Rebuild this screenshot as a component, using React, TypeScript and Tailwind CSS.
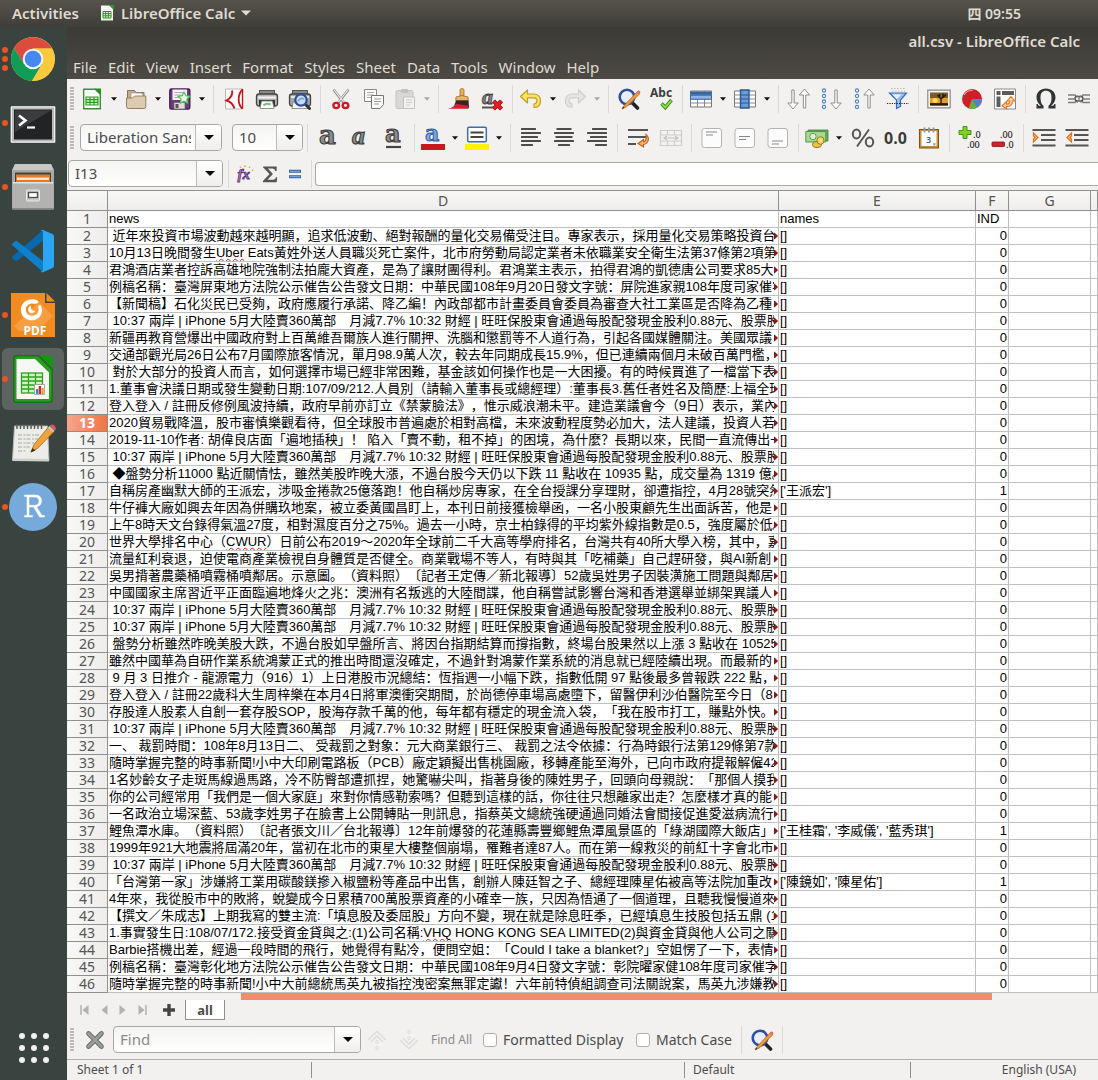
import React from "react";

type Row = { text: string; flag?: string; names?: string; ind?: number };

const repeated =
  " 10:37 兩岸 | iPhone 5月大陸賣360萬部　月減7.7% 10:32 財經 | 旺旺保股東會通過每股配發現金股利0.88元、股票股";

const rows: Row[] = [
  { text: " 近年來投資市場波動越來越明顯，追求低波動、絕對報酬的量化交易備受注目。專家表示，採用量化交易策略投資台" },
  { text: "10月13日晚間發生Uber Eats黃姓外送人員職災死亡案件，北市府勞動局認定業者未依職業安全衛生法第37條第2項第", flag: "Uber" },
  { text: "君鴻酒店業者控訴高雄地院強制法拍龐大資產，是為了讓財團得利。君鴻業主表示，拍得君鴻的凱德唐公司要求85大" },
  { text: "例稿名稱：臺灣屏東地方法院公示催告公告發文日期：中華民國108年9月20日發文字號：屏院進家親108年度司家催字" },
  { text: "【新聞稿】石化災民已受夠，政府應履行承諾、降乙編！內政部都市計畫委員會委員為審查大社工業區是否降為乙種" },
  { text: repeated },
  { text: "新疆再教育營爆出中國政府對上百萬維吾爾族人進行關押、洗腦和懲罰等不人道行為，引起各國媒體關注。美國眾議" },
  { text: "交通部觀光局26日公布7月國際旅客情況，單月98.9萬人次，較去年同期成長15.9%，但已連續兩個月未破百萬門檻，" },
  { text: " 對於大部分的投資人而言，如何選擇市場已經非常困難，基金該如何操作也是一大困擾。有的時候買進了一檔當下表" },
  { text: "1.董事會決議日期或發生變動日期:107/09/212.人員別（請輸入董事長或總經理）:董事長3.舊任者姓名及簡歷:上福全球" },
  { text: "登入登入 / 註冊反修例風波持續，政府早前亦訂立《禁蒙臉法》，惟示威浪潮未平。建造業議會今（9日）表示，業內" },
  { text: "2020貿易戰降溫，股市審慎樂觀看待，但全球股市普遍處於相對高檔，未來波動程度勢必加大，法人建議，投資人若" },
  { text: "2019-11-10作者: 胡偉良店面「遍地插秧」！ 陷入「賣不動，租不掉」的困境，為什麼？長期以來，民間一直流傳出一" },
  { text: repeated },
  { text: " ◆盤勢分析11000 點近關情怯，雖然美股昨晚大漲，不過台股今天仍以下跌 11 點收在 10935 點，成交量為 1319 億。" },
  { text: "自稱房產幽默大師的王派宏，涉吸金捲款25億落跑！他自稱炒房專家，在全台授課分享理財，卻遭指控，4月28號突然", names: "['王派宏']", ind: 1 },
  { text: "牛仔褲大廠如興去年因為併購玖地案，被立委黃國昌盯上，本刊日前接獲檢舉函，一名小股東顧先生出面訴苦，他是" },
  { text: "上午8時天文台錄得氣溫27度，相對濕度百分之75%。過去一小時，京士柏錄得的平均紫外線指數是0.5，強度屬於低。" },
  { text: "世界大學排名中心（CWUR）日前公布2019～2020年全球前二千大高等學府排名，台灣共有40所大學入榜，其中，嘉", flag: "CWUR" },
  { text: "流量紅利衰退，迫使電商產業檢視自身體質是否健全。商業戰場不等人，有時與其「吃補藥」自己趕研發，與AI新創" },
  { text: "吳男揹著農藥桶噴霧桶噴鄰居。示意圖。（資料照）〔記者王定傳／新北報導〕52歲吳姓男子因裝潢施工問題與鄰居" },
  { text: "中國國家主席習近平正面臨遍地烽火之兆：澳洲有名叛逃的大陸間諜，他自稱嘗試影響台灣和香港選舉並綁架異議人" },
  { text: repeated },
  { text: repeated },
  { text: " 盤勢分析雖然昨晚美股大跌，不過台股如早盤所言、將因台指期結算而撐指數，終場台股果然以上漲 3 點收在 10525" },
  { text: "雖然中國華為自研作業系統鴻蒙正式的推出時間還沒確定，不過針對鴻蒙作業系統的消息就已經陸續出現。而最新的" },
  { text: " 9 月 3 日推介 - 龍源電力（916）1）上日港股市況總結：恆指週一小幅下跌，指數低開 97 點後最多曾報跌 222 點，" },
  { text: "登入登入 / 註冊22歲科大生周梓樂在本月4日將軍澳衝突期間，於尚德停車場高處墮下，留醫伊利沙伯醫院至今日（8" },
  { text: "存股達人股素人自創一套存股SOP，股海存款千萬的他，每年都有穩定的現金流入袋，「我在股市打工，賺點外快。" },
  { text: repeated },
  { text: "一、 裁罰時間：108年8月13日二、 受裁罰之對象：元大商業銀行三、 裁罰之法令依據：行為時銀行法第129條第7款" },
  { text: "隨時掌握完整的時事新聞!小中大印刷電路板（PCB）廠定穎擬出售桃園廠，移轉產能至海外，已向市政府提報解僱42" },
  { text: "1名妙齡女子走斑馬線過馬路，冷不防臀部遭抓捏，她驚嚇尖叫，指著身後的陳姓男子，回頭向母親說：「那個人摸我" },
  { text: "你的公司經常用「我們是一個大家庭」來對你情感勒索嗎？但聽到這樣的話，你往往只想離家出走？怎麼樣才真的能" },
  { text: "一名政治立場深藍、53歲李姓男子在臉書上公開轉貼一則訊息，指蔡英文總統強硬通過同婚法會間接促進愛滋病流行" },
  { text: "鯉魚潭水庫。（資料照）〔記者張文川／台北報導〕12年前爆發的花蓮縣壽豐鄉鯉魚潭風景區的「綠湖國際大飯店」", names: "['王桂霜', '李威儀', '藍秀琪']", ind: 1 },
  { text: "1999年921大地震將屆滿20年，當初在北市的東星大樓整個崩塌，罹難者達87人。而在第一線救災的前紅十字會北市" },
  { text: repeated },
  { text: "「台灣第一家」涉嫌將工業用碳酸鎂摻入椒鹽粉等產品中出售，創辦人陳廷智之子、總經理陳星佑被高等法院加重改", names: "['陳鏡如', '陳星佑']", ind: 1 },
  { text: "4年來，我從股市中的敗將，蛻變成今日累積700萬股票資產的小確幸一族，只因為悟通了一個道理，且聽我慢慢道來" },
  { text: "【撰文／朱成志】上期我寫的雙主流:「填息股及委屈股」方向不變，現在就是除息旺季，已經填息生技股包括五鼎 (1" },
  { text: "1.事實發生日:108/07/172.接受資金貸與之:(1)公司名稱:VHQ HONG KONG SEA LIMITED(2)與資金貸與他人公司之關", flag: "VHQ" },
  { text: "Barbie搭機出差，經過一段時間的飛行，她覺得有點冷，便問空姐：「Could I take a blanket?」空姐愣了一下，表情" },
  { text: "例稿名稱：臺灣彰化地方法院公示催告公告發文日期：中華民國108年9月4日發文字號：彰院曜家健108年度司家催字" },
  { text: "隨時掌握完整的時事新聞!小中大前總統馬英九被指控洩密案無罪定讞！六年前特偵組調查司法關說案，馬英九涉嫌教" },
];

const Svg = ({ children, size = 24 }: { children: React.ReactNode; size?: number }) => (
  <svg viewBox="0 0 24 24" width={size} height={size} fill="none" aria-hidden="true" className="shrink-0 overflow-visible">
    {children}
  </svg>
);

/* ---------- toolbar icons ---------- */
const NewDoc = () => (
  <Svg>
    <path d="M3.700 2.200h11.500l5.100 5.100v14.500H3.700z" fill="#fff" stroke="#3b8f33" strokeWidth="1.400" />
    <path d="M14.500 1.500h6.500v6.500z" fill="#2f8a25" />
    <path d="M6 10h12v8H6z" fill="#d8f5d0" stroke="#2e9a22" strokeWidth="1.200" />
    <path d="M6 12.700h12M6 15.300h12M10 10v8M14 10v8" stroke="#2e9a22" strokeWidth="1.200" />
  </Svg>
);
const Folder = () => (
  <Svg>
    <path d="M3.500 20V3.500h7l1.500 2h8V20z" fill="#c2ad90" stroke="#8b7355" />
    <path d="M7 6h10l2 2v6H7z" fill="#fff" stroke="#999" strokeWidth=".8" />
    <path d="M2.500 11h6l2-2h11.300v10.500q0 2-2 2H4.500q-2 0-2-2z" fill="#dccbb0" stroke="#95805f" />
  </Svg>
);
const Save = () => (
  <Svg>
    <rect x="1.800" y="2" width="20" height="20" rx="1.500" fill="#6d3a7b" stroke="#472050" strokeWidth="1.400" />
    <rect x="4.500" y="2.500" width="14.500" height="10.500" fill="#f6f2f7" />
    <path d="M6.500 5.500h9M6.500 8h7M6.500 10.500h6" stroke="#aaa" />
    <rect x="6" y="15.500" width="11" height="6.500" fill="#ddd" stroke="#666" strokeWidth=".7" />
    <rect x="7.500" y="17" width="3" height="4" fill="#555" />
    <path d="M16 5l1.800 3.700 4 .6-2.900 2.800.7 4-3.600-1.900-3.600 1.900.7-4-2.900-2.800 4-.6z" fill="#e9ffe8" stroke="#50c35b" strokeWidth="1.200" />
  </Svg>
);
const Pdf = () => (
  <Svg>
    <path d="M3.500 2h17v20h-17z" fill="#fdfdfd" stroke="#b9b9b9" />
    <path d="M10 3.500C11 7 9.500 10.500 4.500 13.500c4 1 6.500 3.500 8 8" stroke="#c8161d" strokeWidth="1.900" />
    <path d="M20.500 2.500c-5 5-5 14-.5 19" stroke="#c8161d" strokeWidth="1.800" />
    <path d="M20.500 2v20" stroke="#c8161d" strokeWidth="1.400" />
  </Svg>
);
const Printer = () => (
  <Svg>
    <rect x="4.500" y="3.500" width="15" height="6" fill="#888" stroke="#555" />
    <rect x="1.500" y="7" width="21" height="12" rx="2.500" fill="#b6b6b4" stroke="#444" strokeWidth="1.300" />
    <path d="M3 10.500h18" stroke="#f4f4f4" strokeWidth="2" />
    <path d="M4 13h16v6H4z" fill="#333" />
    <path d="M6.500 14h11l1.500 7.500H5z" fill="#fcfcfc" stroke="#777" strokeWidth=".8" />
    <path d="M8.500 18.500q3-3 7-1" stroke="#6fc36f" strokeWidth="2" />
  </Svg>
);
const Preview = () => (
  <Svg>
    <rect x="4.500" y="3.500" width="15" height="6" fill="#888" stroke="#555" />
    <rect x="1.500" y="7" width="21" height="12" rx="2.500" fill="#a7a7a5" stroke="#444" strokeWidth="1.300" />
    <path d="M3 10h18" stroke="#eee" strokeWidth="1.800" />
    <path d="M5 15h14l1 6.500H4z" fill="#f2f2f2" stroke="#777" strokeWidth=".8" />
    <path d="M17.500 17.500l4 4" stroke="#333" strokeWidth="3" strokeLinecap="round" />
    <circle cx="13" cy="13" r="5.700" fill="#c8d8ef" stroke="#2c4f9c" strokeWidth="2.200" />
    <path d="M10 14q3-4 6-2" stroke="#71a7c8" strokeWidth="1.600" />
  </Svg>
);
const Cut = () => (
  <Svg>
    <path d="M4.500 2.500L15 16M19.500 2.500L9 16" stroke="#888" strokeWidth="2.600" />
    <path d="M4.700 2.500L15 15.500M19.300 2.500L9 15.500" stroke="#eee" strokeWidth="1.200" />
    <ellipse cx="7.200" cy="18.500" rx="2.800" ry="2.600" stroke="#cf1820" strokeWidth="2.400" />
    <ellipse cx="16.500" cy="18.500" rx="2.800" ry="2.600" stroke="#cf1820" strokeWidth="2.400" />
  </Svg>
);
const Copy = () => (
  <Svg>
    <path d="M2.500 2.500h12v12h-12z" fill="#fdfdfd" stroke="#888" />
    <path d="M5 5.500h7M5 8h7M5 10.500h5" stroke="#aaa" />
    <path d="M9.500 8.500h12v9l-3.500 4h-8.500z" fill="#fdfdfd" stroke="#777" />
    <path d="M12 12h7M12 14.500h7M12 17h5" stroke="#999" />
  </Svg>
);
const Paste = () => (
  <Svg>
    <rect x="3" y="3.500" width="17" height="18" rx="1.500" fill="#d9d8d6" stroke="#c4c3c1" />
    <rect x="7.500" y="2" width="8" height="4" rx="1.500" fill="#c2c1bf" />
    <path d="M10.500 10h11v11.500h-11z" fill="#f3f2f1" stroke="#c2c1bf" />
    <path d="M13 13h6M13 15.500h6M13 18h4" stroke="#cccbc9" />
  </Svg>
);
const Brush = () => (
  <Svg>
    <rect x="13" y="1.500" width="4" height="9" rx="1.800" fill="#e9ad55" stroke="#a86a1e" strokeWidth=".8" />
    <path d="M9 10q6-3 12 0l.3 3.500H8.700z" fill="#e6b566" stroke="#9a6a2b" strokeWidth=".8" />
    <path d="M9 13.500h12.500l.5 7.500H6.500z" fill="#3a2328" />
    <path d="M1 21.800q6-1.500 8-5l12 2 .5 3z" fill="#cf2331" />
  </Svg>
);
const ClearFormat = () => (
  <Svg>
    <text x="2" y="16.500" fontSize="22" fontStyle="italic" fontWeight="700" fontFamily="Liberation Serif, serif" fill="#888" stroke="#3d3d3d" strokeWidth=".9">a</text>
    <path d="M2 20.500h11" stroke="#555" strokeWidth="2" />
    <path d="M13.500 14l8 8M21.500 14l-8 8" stroke="#8f0b10" strokeWidth="4.200" />
    <path d="M13.500 14l8 8M21.500 14l-8 8" stroke="#ee1c22" strokeWidth="2.600" />
  </Svg>
);
const Undo = () => (
  <Svg>
    <path d="M1.500 9.500L8.500 3v4h6.500q6.500.5 6.500 7t-6.500 6.500v-3.500q3-.5 3-3.200t-3-3H8.500V16z" fill="#f6e26b" stroke="#c3a01b" strokeWidth="1.200" strokeLinejoin="round" />
  </Svg>
);
const Redo = () => (
  <Svg>
    <path d="M22.500 9.500L15.500 3v4H9q-6.500.5-6.500 7T9 20v-3q-3-1-3-3.500t3-2.700h6.500V16z" fill="#e6e5e3" stroke="#cfcecc" strokeWidth="1.200" strokeLinejoin="round" />
  </Svg>
);
const FindReplace = () => (
  <Svg>
    <path d="M14.500 15l6 6" stroke="#222" strokeWidth="3.600" strokeLinecap="round" />
    <circle cx="10" cy="10" r="7.300" fill="#e9eef6" stroke="#2e4f9f" strokeWidth="2.600" />
    <path d="M20.500 4.500L8 17.500l-3 4.500 5-2.500L22.500 7z" fill="#f09a3e" stroke="#a85e17" strokeWidth=".7" />
    <path d="M20 5l1-1.500q2-.5 2.500 2l-1.500 1.700z" fill="#e46a6a" />
    <path d="M6 19.500l-1 2.500 2.500-1.200z" fill="#333" />
  </Svg>
);
const Spell = () => (
  <Svg>
    <text x="0" y="10" fontSize="12" fontWeight="700" fontFamily="Noto Sans, sans-serif" fill="#3d3d3d">Abc</text>
    <path d="M11.500 16.500l3.800 4L21.500 13" stroke="#3d8d19" strokeWidth="3.600" />
    <path d="M11.800 16.800l3.500 3.500L21.200 13.300" stroke="#8ed94f" strokeWidth="1.800" />
  </Svg>
);
const RowsIcon = () => (
  <Svg>
    <path d="M1.500 4h21v16h-21z" fill="#fff" stroke="#777" />
    <path d="M1.500 8h21M1.500 12h21M1.500 16h21M8.500 4v16M15.500 4v16" stroke="#888" />
    <path d="M1.500 4.500h21v3.300h-21z" fill="#3465a4" />
    <path d="M1.500 8.200h21v4h-21z" fill="#8db4e3" stroke="#3465a4" />
  </Svg>
);
const ColsIcon = () => (
  <Svg>
    <path d="M1.500 4h21v16h-21z" fill="#fff" stroke="#777" />
    <path d="M1.500 8h21M1.500 12h21M1.500 16h21M8.500 4v16M15.500 4v16" stroke="#888" />
    <path d="M7.500 3h8.500v18H7.500z" fill="#6a9bd8" stroke="#2c5490" strokeWidth="1.400" />
    <path d="M8 8h7.500M8 12h7.500M8 16h7.500" stroke="#2c5490" />
  </Svg>
);
const ArrowDownShape = ({ x }: { x: number }) => (
  <path d={`M${x - 1.2} 3v13h-4l5.200 6 5.200-6h-4V3z`} fill="#fafafa" stroke="#8f8f8f" strokeWidth="1" />
);
const ArrowUpShape = ({ x }: { x: number }) => (
  <path d={`M${x - 1.2} 21V8h-4L${x} 2l5.200 6h-4v13z`} fill="#fafafa" stroke="#8f8f8f" strokeWidth="1" />
);
const SortBoth = () => (
  <Svg>
    <ArrowDownShape x={6} />
    <ArrowUpShape x={17.5} />
  </Svg>
);
const Dots = () => (
  <>
    {[3.5, 9, 14.5, 20].map((y) => (
      <circle key={y} cx="4" cy={y} r="1.600" fill="#fff" stroke="#4a7fc1" strokeWidth="1.100" />
    ))}
  </>
);
const SortAsc = () => (
  <Svg>
    <Dots />
    <ArrowDownShape x={16} />
  </Svg>
);
const SortDesc = () => (
  <Svg>
    <Dots />
    <ArrowUpShape x={16} />
  </Svg>
);
const Filter = () => (
  <Svg>
    <path d="M5 1.500h15M6 4h13" stroke="#bbb" strokeDasharray="1.500 1.500" />
    <path d="M3.500 6h17l-6 7v6.500l-4 2v-8.500z" fill="#9cc0ea" stroke="#3a6db0" strokeWidth="1.200" />
    <path d="M6.500 7.300h9l-5 5z" fill="#e3effb" />
    <path d="M1 16.500h22" stroke="#222" strokeWidth="1.200" strokeDasharray="1.200 1.200" />
  </Svg>
);
const Picture = () => (
  <Svg>
    <path d="M.8 3.200h22.400v17.600H.8z" fill="#f5f5f3" stroke="#8a8a87" strokeWidth="1.200" />
    <path d="M3 5.500h18v13H3z" fill="#7a5c2c" />
    <path d="M3 11h18v5H3z" fill="#e79b2a" />
    <circle cx="8" cy="13.500" r="2.500" fill="#ffd96b" />
    <path d="M3 16.200h18v2.300H3z" fill="#2b1d0d" />
    <path d="M14 17v-5l-3.500-4M14 12l5-4.500M16 10V6.500M12 10l1-3" stroke="#1c130a" strokeWidth="1.300" />
  </Svg>
);
const Chart = () => (
  <Svg>
    <circle cx="12" cy="12" r="10" fill="#cf1f26" />
    <path d="M12 12h10a10 10 0 0 1-4.500 8.500z" fill="#4a86c9" />
    <path d="M12 12l5.500 8.500A10 10 0 0 1 8.500 21.400z" fill="#6dab43" />
    <path d="M4 8q3-5 9-4.500" stroke="#f08d8d" strokeWidth="1.200" />
  </Svg>
);
const Pivot = () => (
  <Svg>
    <path d="M1.500 2h21v20h-21z" fill="#fff" stroke="#888" />
    <path d="M3.500 4h4v4h-4zM9 4h12v4H9zM3.500 9.500h4V20h-4z" fill="#5c5c5c" />
    <path d="M18 9.500l-4 4.500h2.700q0 3.300-3.200 3.300v-2.500L9 18.800l4.500 3.200v-2.500q6 0 6-5.500h2.500z" fill="#fbd2a3" stroke="#e2731b" strokeWidth="1.100" />
  </Svg>
);
const Omega = () => (
  <Svg>
    <path d="M2.500 21.500h7v-2.700C7 17 6.500 14 6.500 10.500 6.500 6 8.500 3.800 12 3.800s5.500 2.200 5.500 6.700c0 3.500-.5 6.500-3 8.300v2.700h7V17h-1.200q-.3 1.800-1.500 1.800H17c2.500-2 4.500-4.500 4.500-8.300C21.500 5 17.500 1.500 12 1.500S2.500 5 2.500 10.500c0 3.800 2 6.300 4.500 8.300H5.200Q4 18.800 3.700 17H2.500z" fill="#2f3437" />
  </Svg>
);
const Chain = () => (
  <Svg>
    <path d="M1 8h7l1.500 2M1 15.500h7l1.500-2M23 8h-7l-1.500 2M23 15.500h-7l-1.500-2M1 12h6M17 12h6" stroke="#7d7d7d" strokeWidth="1.500" />
    <rect x="8" y="9.500" width="8" height="4.500" rx="2.200" stroke="#555" strokeWidth="1.500" />
    <path d="M10 8l4 8M14 8l-4 8" stroke="#888" />
  </Svg>
);
const Letter = ({ style, under }: { style?: string; under?: boolean }) => (
  <Svg>
    <text
      x="3"
      y={under ? 16 : 18}
      fontSize={under ? 24 : 26}
      fontStyle={style}
      fontWeight="700"
      fontFamily={style ? "Liberation Serif, serif" : "DejaVu Serif, serif"}
      fill="#8c8c8c"
      stroke="#3d3d3d"
      strokeWidth="1.100"
    >
      a
    </text>
    {under && <path d="M4 21h15" stroke="#444" strokeWidth="2.200" />}
  </Svg>
);
const FontColor = () => (
  <Svg>
    <text x="4" y="15" fontSize="22" fontWeight="700" fontFamily="DejaVu Serif, serif" fill="#7ea9dc" stroke="#2d5c9e" strokeWidth="1">a</text>
    <path d="M0 18h24v6H0z" fill="#c9191f" />
  </Svg>
);
const Highlight = () => (
  <Svg>
    <rect x="2.700" y="1.200" width="18.600" height="14.600" rx="1" fill="#fdfdfd" stroke="#3d6fae" strokeWidth="1.500" />
    <path d="M5.500 6.500h13M5.500 11h13" stroke="#444" strokeWidth="1.800" />
    <path d="M0 18h24v6H0z" fill="#fdf200" />
  </Svg>
);
const Align = ({ kind }: { kind: "l" | "c" | "r" }) => {
  const widths = [15, 20, 17, 20, 12];
  return (
    <Svg>
      {widths.map((w, i) => {
        const x = kind === "l" ? 2 : kind === "c" ? 12 - w / 2 : 22 - w;
        return <rect key={i} x={x} y={2 + i * 4} width={w} height="2" rx=".6" fill="#4c4c4c" />;
      })}
    </Svg>
  );
};
const Wrap = () => (
  <Svg>
    <path d="M2 4h20M2 11h18M2 18h8" stroke="#555" strokeWidth="2.200" />
    <path d="M20 8.500q4 3.500 1.500 7.500-1.500 2.500-4 2.500v2.500L12 17.500l5.500-4v2.200q3.500-.7 2.500-7.200z" fill="#f6b26b" stroke="#c65f11" strokeWidth="1.100" />
  </Svg>
);
const Merge = () => (
  <Svg>
    <path d="M1.500 4.500h21v15h-21zM1.500 9h21M1.500 15h21M8.500 4.500V9M15.500 4.500V9M8.500 15v4.500M15.500 15v4.500" stroke="#cfcecc" strokeWidth="1.200" />
    <path d="M5 12h14M8 10l-3 2 3 2M16 10l3 2-3 2" stroke="#c4c3c1" strokeWidth="1.200" />
  </Svg>
);
const VAlign = ({ y }: { y: number }) => (
  <Svg>
    <rect x="2" y="2.500" width="19.500" height="19" rx="2.500" fill="#fcfcfc" stroke="#b4b3b1" />
    <path d={`M6 ${y}h11M6 ${y + 3}h7`} stroke="#888" strokeWidth="1.100" />
  </Svg>
);
const Money = () => (
  <Svg>
    <path d="M3 4h20v11H3z" fill="#6fb05a" stroke="#3f7f2f" strokeWidth=".8" />
    <path d="M.8 5.500h20V16H.8z" fill="#a9d896" stroke="#4e8f3c" strokeWidth=".9" />
    <circle cx="8" cy="10.500" r="3.200" fill="#dff2d6" stroke="#5e9e4c" />
    <ellipse cx="12" cy="18.500" rx="4.500" ry="3" fill="#e8c34b" stroke="#9a7711" />
    <ellipse cx="15.500" cy="14.500" rx="3.500" ry="3.800" fill="#f3d871" stroke="#9a7711" />
  </Svg>
);
const Percent = () => (
  <Svg>
    <ellipse cx="5.500" cy="8" rx="3.700" ry="4.500" stroke="#555" strokeWidth="2" />
    <ellipse cx="18.500" cy="16" rx="3.700" ry="4.500" stroke="#555" strokeWidth="2" />
    <path d="M18 3.500L6 20.500" stroke="#555" strokeWidth="1.900" />
  </Svg>
);
const Calendar = () => (
  <Svg>
    <rect x="2.500" y="3.500" width="19" height="18.500" fill="#c98f3d" stroke="#7d5116" />
    <path d="M4.500 5h15v15h-15z" fill="#fff" />
    <path d="M7.500 1.500v5M12 1.500v5M16.500 1.500v5" stroke="#999" strokeWidth="2" />
    <text x="9" y="16.500" fontSize="9" fontWeight="600" fontFamily="Noto Sans, sans-serif" fill="#3b5f8c">3</text>
    <path d="M16 17h2.500v2.500H16z" fill="#aaa" />
  </Svg>
);
const AddDecimal = () => (
  <Svg>
    <path d="M5 .5h4v4h4v4H9v4H5v-4H1v-4h4z" fill="#7ed321" stroke="#3c8a12" strokeWidth=".9" />
    <text x="15" y="11.500" fontSize="9" fontWeight="500" fontFamily="Noto Sans, sans-serif" fill="#222">.0</text>
    <text x="9" y="21.500" fontSize="9" fontWeight="500" fontFamily="Noto Sans, sans-serif" fill="#222">.00</text>
  </Svg>
);
const DelDecimal = () => (
  <Svg>
    <text x="9" y="11.500" fontSize="9" fontWeight="500" fontFamily="Noto Sans, sans-serif" fill="#222">.00</text>
    <rect x="1" y="16" width="12.500" height="4.500" rx=".8" fill="#d51f2a" stroke="#8f0c14" strokeWidth=".8" />
    <text x="15" y="21.500" fontSize="9" fontWeight="500" fontFamily="Noto Sans, sans-serif" fill="#222">.0</text>
  </Svg>
);
const Indent = ({ out }: { out?: boolean }) => (
  <Svg>
    <path d="M.5 4h23M9 9h14.500M9 14h14.500M.5 19.500h23" stroke="#555" strokeWidth="2.200" />
    <path
      d={out ? "M6.500 7L2 11.500 6.500 16v-3L5 11.500 6.500 10z" : "M1.500 7L6 11.500 1.500 16v-3L3 11.500 1.500 10z"}
      fill="#fbc48f"
      stroke="#e0741d"
      strokeWidth="1.200"
    />
  </Svg>
);
const Fx = () => (
  <Svg size={18}>
    <path d="M5 3h2M11 1.500h2M17 3h2M21 7h2M8 6h2" stroke="#e3b71f" strokeWidth="2.200" />
    <text x="2" y="19" fontSize="20" fontStyle="italic" fontWeight="700" fontFamily="Liberation Serif, serif" fill="#a57cc0" stroke="#5c2b78" strokeWidth="1">fx</text>
  </Svg>
);
const Sigma = () => (
  <Svg size={20}>
    <path d="M4 3h16v5.500h-1.500Q18 5.500 15 5.500H9.500l6 6.500-6.500 7h6.500q3 0 3.700-3h1.500L20 22H3.500v-1.500l8-8.500L3.500 4z" fill="#555" />
  </Svg>
);
const Equals = () => (
  <Svg size={16}>
    <path d="M3 8h18M3 16h18" stroke="#2d5f9f" strokeWidth="4.500" />
    <path d="M4 8h16M4 16h16" stroke="#8fb6e2" strokeWidth="1.600" />
  </Svg>
);
const CloseX = () => (
  <Svg>
    <path d="M5.500 5.500l13 13M18.500 5.500l-13 13" stroke="#666" strokeWidth="4.600" strokeLinecap="round" />
    <path d="M5.500 5.500l13 13M18.500 5.500l-13 13" stroke="#9d9f9b" strokeWidth="2.800" strokeLinecap="round" />
  </Svg>
);
const FindArrow = ({ down }: { down?: boolean }) => (
  <Svg>
    <g transform={down ? "rotate(180 12 12)" : undefined}>
      <path d="M3 12l9-8.500 9 8.500M6 14l6-6 6 6" stroke="#dddcda" strokeWidth="1.400" />
      <path d="M12 12l1.500 2-1.500 2-1.500-2zM12 18l1.500 2-1.500 2-1.500-2z" stroke="#dddcda" />
    </g>
  </Svg>
);

/* ---------- shared controls ---------- */
const Btn = ({ label, children }: { label: string; children: React.ReactNode }) => (
  <button type="button" aria-label={label} className="flex h-8 w-[33px] shrink-0 items-center justify-center">
    {children}
  </button>
);
const Caret = ({ dim }: { dim?: boolean }) => (
  <svg viewBox="0 0 6 4" width="6" height="4" aria-hidden="true">
    <path d="M0 .3h6L3 3.700z" fill={dim ? "#a9a8a6" : "#111"} />
  </svg>
);
const Drop = ({ label, children, dim }: { label: string; children: React.ReactNode; dim?: boolean }) => (
  <div className="flex w-11 shrink-0 items-center">
    <button type="button" aria-label={label} className="flex h-8 w-[30px] items-center justify-center">
      {children}
    </button>
    <button type="button" aria-label={`${label} options`} className="flex h-8 w-3.5 items-center justify-center">
      <Caret dim={dim} />
    </button>
  </div>
);
const Sep = () => (
  <div className="flex w-2 shrink-0 justify-center">
    <div className="h-7 w-px bg-[#dcdad8]" />
  </div>
);
const Grip = () => (
  <div className="mx-[3px] flex w-1 shrink-0 flex-col gap-px">
    {[0, 1, 2, 3, 4, 5, 6, 7].map((i) => (
      <div key={i} className="h-0.5 bg-[#bcbab8]" />
    ))}
  </div>
);
const Combo = ({ label, value, placeholder, className }: { label: string; value?: string; placeholder?: string; className: string }) => (
  <div className={`flex h-[27px] shrink-0 overflow-hidden rounded-[4px] border border-[#a9a7a4] bg-gradient-to-b from-[#f4f4f3] to-white ${className}`}>
    <input
      aria-label={label}
      defaultValue={value}
      placeholder={placeholder}
      className="ml-1.5 mr-1 w-0 min-w-0 flex-1 bg-transparent text-[15px] text-[#4c4c4c] outline-none placeholder:text-[#8b8b8b]"
    />
    <button type="button" aria-label={`${label} list`} className="flex w-[26px] items-center justify-center border-l border-[#bdbbb8] bg-gradient-to-b from-white to-[#efeeec]">
      <svg viewBox="0 0 10 5" width="10" height="5" aria-hidden="true">
        <path d="M0 0h10L5 5z" fill="#0a0a0a" />
      </svg>
    </button>
  </div>
);

/* ---------- dock ---------- */
const dockItems: { name: string; dots: number; active?: boolean; icon: React.ReactNode }[] = [
  {
    name: "Chrome",
    dots: 3,
    icon: (
      <svg viewBox="0 0 48 48" width="48" height="48">
        <circle cx="24" cy="24" r="22" fill="#fbc93d" />
        <path d="M5 13A22 22 0 0 1 43 13.500H24L15 29z" fill="#dd4b3e" />
        <path d="M5 13A22 22 0 0 0 23 46L33 29 24 24 15 29z" fill="#109d58" />
        <path d="M23 46A22 22 0 0 0 43 13.500H24L33.500 28z" fill="#fbc93d" />
        <circle cx="24" cy="24" r="10.300" fill="#f4f4f4" />
        <circle cx="24" cy="24" r="8.300" fill="#4688f2" />
      </svg>
    ),
  },
  {
    name: "Terminal",
    dots: 1,
    icon: (
      <svg viewBox="0 0 48 48" width="48" height="48">
        <rect x="1.500" y="7" width="45" height="37" rx="1.500" fill="#b9b9b7" />
        <rect x="2.500" y="8" width="43" height="35" fill="none" stroke="#eee" />
        <rect x="5" y="10.500" width="38" height="30" fill="#222325" />
        <path d="M6 11.500h36L6 33z" fill="#3b3c3e" />
        <path d="M10 16.500l6.500 5-6.500 5" stroke="#fff" strokeWidth="2.600" fill="none" />
        <path d="M18 28.500h8" stroke="#fff" strokeWidth="2.200" />
      </svg>
    ),
  },
  {
    name: "Files",
    dots: 1,
    icon: (
      <svg viewBox="0 0 48 48" width="48" height="48">
        <path d="M6 1h36l3 6v38q0 1.500-1.500 1.500h-39Q3 46.500 3 45V7z" fill="#a9a9a7" />
        <path d="M6 1h36l2.500 6h-41z" fill="#c7c7c5" />
        <path d="M6 9.500h36V20H6z" fill="#44403d" />
        <path d="M7 11.500h34V20H7z" fill="#e57a28" />
        <path d="M8 14.500h32V17H8z" fill="#f7e6cf" />
        <path d="M4 19h40v26H4z" fill="#b2b2b0" />
        <path d="M4 19h40v1.500H4z" fill="#e3e3e1" />
        <path d="M3 45h42v1.500H3z" fill="#888" />
        <rect x="17.500" y="27" width="13" height="11" rx="1" fill="#c8c8c6" stroke="#e9e9e7" />
        <rect x="19.500" y="29.500" width="9" height="5" fill="#fff" stroke="#4e4e4c" strokeWidth="1.300" />
      </svg>
    ),
  },
  {
    name: "Visual Studio Code",
    dots: 0,
    icon: (
      <svg viewBox="0 0 48 48" width="48" height="48">
        <path d="M3.500 29.500q-1.200 1 0 2l2.600 2.200q1 .7 2 0L34 14V3z" fill="#0a68ad" />
        <path d="M3.500 18.500q-1.200-1 0-2l2.600-2.200q1-.7 2 0L34 34v11z" fill="#0d7fcb" />
        <path d="M34 3l9.500 4q1.500.7 1.500 2.300v29.400q0 1.600-1.500 2.300L34 45.200q-1.500.5-2.700-.7 2.700.5 2.700-2V5.500q0-2.500-2.700-2Q32.500 2.300 34 3z" fill="#2aa6f2" />
      </svg>
    ),
  },
  {
    name: "Foxit PDF Reader",
    dots: 1,
    icon: (
      <svg viewBox="0 0 48 48" width="48" height="48">
        <path d="M2 2h34v10h10v34H2z" fill="#f28c20" />
        <path d="M30 11l14 14-16 15H10L5 35z" fill="#f9b063" opacity=".5" />
        <path d="M37.500 2L46 10.500h-8.500z" fill="#f28c20" />
        <path d="M26 8.500C17 7 11 13 12 20.500 13 28 22 31.500 28 28c5-3 6.500-9 3.500-14-1 0-2 .5-2.500 1.500 1.500 3.500.5 7-2.500 8.500-4 2-9 0-9.500-4.500-.5-4 2-6.500 5.500-7 3-.2 4.500 1 6.500-.5 1-.8.5-2.500-3-3.500z" fill="#fff" />
        <path d="M22 14.500c-3 1-4 5-1.500 7 2 1.500 5 .5 5.500-2-2 1-4-.5-4-2.500z" fill="#fff" />
        <text x="26" y="43.500" textAnchor="middle" fontSize="12" fontWeight="700" fontFamily="Noto Sans, sans-serif" fill="#fff">PDF</text>
      </svg>
    ),
  },
  {
    name: "LibreOffice Calc",
    dots: 1,
    active: true,
    icon: (
      <svg viewBox="0 0 48 48" width="48" height="48">
        <path d="M4 3.500Q4 0 7.500 0H30l14 14v30.500Q44 48 40.500 48h-33Q4 48 4 44.500z" fill="#177314" />
        <path d="M5.500 4Q5.500 1.500 8 1.500h21L42.500 15v29q0 2.500-2.500 2.500H8q-2.500 0-2.500-2.500z" fill="#2a9c20" />
        <path d="M7.500 4h18.500l14 13.500V44h-32.500z" fill="#f6f8f5" />
        <path d="M32 1h8q4 0 4 4v8z" fill="#0f9a0d" />
        <rect x="12.500" y="18" width="21" height="20" fill="#d5efc9" stroke="#2ba51b" strokeWidth="1.300" />
        <path d="M12.500 22h21M12.500 26h21M12.500 30h21M12.500 34h21M19.500 18v20M26.500 18v20" stroke="#2ba51b" strokeWidth="1.300" />
        <path d="M25.500 29.500h10v10h-10z" fill="#fff" stroke="#999" strokeWidth=".8" />
        <path d="M27 34h2.300v5H27z" fill="#2c86c9" />
        <path d="M29.700 31h2.300v8h-2.300z" fill="#d8281f" />
        <path d="M32.400 33h2.300v6h-2.300z" fill="#f0a01e" />
      </svg>
    ),
  },
  {
    name: "Text Editor",
    dots: 0,
    icon: (
      <svg viewBox="0 0 48 48" width="48" height="48">
        <path d="M5.500 7h33l1.500 34.500L3.500 41z" fill="#ecece9" stroke="#b9b9b6" />
        <path d="M3.500 39.500L40 40v2.500L3.500 42z" fill="#cfcfcc" />
        <path d="M8 5v5M11.500 5v5M15 5v5M18.500 5v5M22 5v5M25.500 5v5M29 5v5M32.500 5v5" stroke="#555" strokeWidth="1.400" />
        <path d="M9 16h22M9 20h20M9 24h17M9 28h12M9 32h8" stroke="#a5a5a3" strokeWidth="1.100" strokeDasharray="4 1.500 2 1" />
        <path d="M39.500 8l5 5-16 16.500-6.500 3.500 3-7.500z" fill="#f0a33a" stroke="#a36818" strokeWidth=".8" />
        <path d="M40.500 7l2-1.500q4 0 4.500 4.500L45.500 12z" fill="#d85563" />
        <path d="M39 8.500l5 5 1.500-1.500-5-5z" fill="#c9c9c9" />
        <path d="M23.500 29l-2 4.500 5-2z" fill="#333" />
      </svg>
    ),
  },
  {
    name: "RStudio",
    dots: 1,
    icon: (
      <svg viewBox="0 0 48 48" width="48" height="48">
        <circle cx="24" cy="24" r="24" fill="#75aadb" />
        <path d="M15.500 12h10.500q6.500 0 6.500 5.800 0 5-5 6L33 32.500h2.500V34h-4.800l-6-10H20v8.500h3.500V34h-8v-1.500H18v-19h-2.500zM20 14v8.300h5.500q4.500 0 4.500-4.300 0-4-4.500-4z" fill="#fff" stroke="#fff" strokeWidth=".5" fillRule="evenodd" />
      </svg>
    ),
  },
];

const Dock = () => (
  <nav aria-label="Dock" className="flex w-[67px] shrink-0 flex-col bg-[#39433f]">
    {dockItems.map((item) => (
      <button key={item.name} type="button" aria-label={item.name} className="relative flex h-16 w-full items-center justify-center pr-px">
        <span className={`flex h-[62px] w-[62px] items-center justify-center rounded-md ${item.active ? "bg-[#5c6361]" : ""}`}>{item.icon}</span>
        <span className="absolute inset-y-0 left-0.5 flex flex-col justify-center gap-[3px]">
          {Array.from({ length: item.dots }, (_, i) => (
            <span key={i} className="h-1.5 w-1.5 rounded-full bg-[#e95420]" />
          ))}
        </span>
      </button>
    ))}
    <button type="button" aria-label="Show Applications" className="mt-auto flex h-16 items-center justify-center">
      <span className="grid grid-cols-3 gap-1.5">
        {Array.from({ length: 9 }, (_, i) => (
          <span key={i} className="h-1.5 w-1.5 rounded-full bg-[#f0f0f0]" />
        ))}
      </span>
    </button>
  </nav>
);

/* ---------- sheet ---------- */
const NewsText = ({ text, flag }: { text: string; flag?: string }) => {
  if (!flag) return <>{text}</>;
  const [before, after] = text.split(flag);
  return (
    <>
      {before}
      <span className="underline decoration-[#c9211e] decoration-wavy decoration-1 underline-offset-1 [text-decoration-skip-ink:none]">{flag}</span>
      {after}
    </>
  );
};

const cell = "h-[17px] overflow-hidden whitespace-pre border-b border-r border-[#c0c0c0] p-0 pl-px leading-4";
const colHead = "h-5 border-b border-r border-[#8f8f8f] bg-gradient-to-b from-[#f8f8f7] to-[#eeedeb] p-0 text-center text-sm font-normal leading-[19px]";

const Sheet = () => (
  <table className="w-full table-fixed border-separate border-spacing-0 border-t border-[#8f8f8f] bg-white text-[13px] text-black [text-spacing-trim:space-all]">
    <colgroup>
      <col className="w-[41px]" />
      <col className="w-[671px]" />
      <col className="w-[197px]" />
      <col className="w-[33px]" />
      <col className="w-[82px]" />
      <col />
    </colgroup>
    <thead className="font-[Noto_Sans,sans-serif] text-[#555]">
      <tr>
        {["", "D", "E", "F", "G", ""].map((c, i) => (
          <th key={i} scope="col" className={colHead}>
            {c}
          </th>
        ))}
      </tr>
    </thead>
    <tbody className="font-[Liberation_Sans,Noto_Sans_CJK_SC,sans-serif]">
      {[{ text: "news", names: "names" } as Row, ...rows].map((r, i) => {
        const n = i + 1;
        const active = n === 13;
        return (
          <tr key={n}>
            <th
              scope="row"
              className={`h-[17px] border-b border-r border-[#8f8f8f] p-0 text-center font-[Noto_Sans,sans-serif] text-sm leading-4 ${
                active ? "bg-gradient-to-r from-[#f6a58b] to-[#ef7544] font-bold text-white" : "bg-gradient-to-r from-[#f8f8f7] to-[#eeedeb] font-normal text-[#555]"
              }`}
            >
              {n}
            </th>
            <td className={`relative ${cell}`}>
              <NewsText text={r.text} flag={r.flag} />
              {n > 1 && (
                <span className="absolute inset-y-0 right-0 flex w-1 items-center bg-white">
                  <svg viewBox="0 0 4 8" width="4" height="8" aria-hidden="true">
                    <path d="M.4 1L3.600 4 .4 7z" fill="#d00000" stroke="#200" strokeWidth=".7" />
                  </svg>
                </span>
              )}
            </td>
            <td className={cell}>{r.names ?? "[]"}</td>
            <td className={n === 1 ? cell : `${cell} pr-px text-right`}>{n === 1 ? "IND" : (r.ind ?? 0)}</td>
            <td className={cell} />
            <td className={cell} />
          </tr>
        );
      })}
    </tbody>
  </table>
);

const NavArrow = ({ dir, end }: { dir: "l" | "r"; end?: boolean }) => (
  <button type="button" aria-label={`${end ? (dir === "l" ? "First" : "Last") : dir === "l" ? "Previous" : "Next"} sheet`} className="flex w-[19px] items-center justify-center">
    <svg viewBox="0 0 10 10" width="10" height="10" aria-hidden="true">
      <path d={dir === "l" ? "M8.500 0v10L2.500 5z" : "M1.500 0v10l6-5z"} fill="#b3b2b0" />
      {end && <path d={dir === "l" ? "M1 0v10" : "M9 0v10"} stroke="#b3b2b0" strokeWidth="1.500" />}
    </svg>
  </button>
);

const menus = ["File", "Edit", "View", "Insert", "Format", "Styles", "Sheet", "Data", "Tools", "Window", "Help"];

export default function App() {
  return (
    <div className="flex min-h-screen flex-col overflow-hidden bg-[#f2f1f0] font-[Noto_Sans,sans-serif] text-sm text-[#4c4c4c]">
      <header className="flex h-[27px] shrink-0 items-center bg-gradient-to-b from-[#56534b] to-[#3f3e39] text-[15px] font-semibold text-[#dfdbd2]">
        <button type="button" className="ml-3">Activities</button>
        <button type="button" className="ml-5 flex items-center gap-1.5">
          <svg viewBox="0 0 16 16" width="16" height="16" aria-hidden="true">
            <path d="M2 .5h8.500L14 4v11.500H2z" fill="#f4faf2" />
            <path d="M10 0h5v5z" fill="#2c9a20" />
            <path d="M4 6.500h8v6.500H4z" fill="#fff" stroke="#219615" />
            <path d="M4 8.700h8M4 10.800h8M6.700 6.500V13M9.300 6.500V13" stroke="#219615" />
          </svg>
          LibreOffice Calc
          <svg viewBox="0 0 10 6" width="10" height="6" aria-hidden="true">
            <path d="M0 .5h10L5 5.500z" fill="#dfdbd2" />
          </svg>
        </button>
        <span className="ml-auto mr-[77px] font-[Noto_Sans,Noto_Sans_CJK_TC,sans-serif] text-sm">四 09:55</span>
      </header>

      <div className="flex min-h-0 flex-1">
        <Dock />
        <main className="flex min-w-0 flex-1 flex-col overflow-hidden">
          <div className="flex h-[52px] flex-col bg-gradient-to-b from-[#3b3a36] to-[#4d4a44] text-[15px] text-[#dfdbd2]">
            <h1 className="h-7 pr-[18px] text-right font-semibold leading-7">all.csv - LibreOffice Calc</h1>
            <div role="menubar" className="flex gap-[11px] pl-1.5 leading-6">
              {menus.map((m) => (
                <button key={m} type="button" role="menuitem">
                  {m}
                </button>
              ))}
            </div>
          </div>

          <div className="flex h-[39px] items-center">
            <Grip />
            <Drop label="New"><NewDoc /></Drop>
            <Drop label="Open"><Folder /></Drop>
            <Drop label="Save"><Save /></Drop>
            <Sep />
            <Btn label="Export as PDF"><Pdf /></Btn>
            <Btn label="Print"><Printer /></Btn>
            <Btn label="Print Preview"><Preview /></Btn>
            <Sep />
            <Btn label="Cut"><Cut /></Btn>
            <Btn label="Copy"><Copy /></Btn>
            <Drop label="Paste" dim><Paste /></Drop>
            <Sep />
            <Btn label="Clone Formatting"><Brush /></Btn>
            <Btn label="Clear Formatting"><ClearFormat /></Btn>
            <Sep />
            <Drop label="Undo"><Undo /></Drop>
            <Drop label="Redo" dim><Redo /></Drop>
            <Sep />
            <Btn label="Find and Replace"><FindReplace /></Btn>
            <Btn label="Spelling"><Spell /></Btn>
            <Sep />
            <Drop label="Row"><RowsIcon /></Drop>
            <Drop label="Column"><ColsIcon /></Drop>
            <Sep />
            <Btn label="Sort"><SortBoth /></Btn>
            <Btn label="Sort Ascending"><SortAsc /></Btn>
            <Btn label="Sort Descending"><SortDesc /></Btn>
            <Btn label="AutoFilter"><Filter /></Btn>
            <Sep />
            <Btn label="Insert Image"><Picture /></Btn>
            <Btn label="Insert Chart"><Chart /></Btn>
            <Btn label="Pivot Table"><Pivot /></Btn>
            <Sep />
            <Btn label="Special Character"><Omega /></Btn>
            <Btn label="Hyperlink"><Chain /></Btn>
          </div>

          <div className="flex h-[39px] items-center">
            <Grip />
            <Combo label="Font Name" value="Liberation Sans" className="ml-[3px] w-[142px]" />
            <Combo label="Font Size" value="10" className="ml-2.5 w-[71px]" />
            <Sep />
            <Btn label="Bold"><Letter /></Btn>
            <Btn label="Italic"><Letter style="italic" /></Btn>
            <Btn label="Underline"><Letter under /></Btn>
            <Sep />
            <Drop label="Font Color"><FontColor /></Drop>
            <Drop label="Highlighting"><Highlight /></Drop>
            <Sep />
            <Btn label="Align Left"><Align kind="l" /></Btn>
            <Btn label="Center Horizontally"><Align kind="c" /></Btn>
            <Btn label="Align Right"><Align kind="r" /></Btn>
            <Sep />
            <Btn label="Wrap Text"><Wrap /></Btn>
            <Btn label="Merge Cells"><Merge /></Btn>
            <Sep />
            <Btn label="Align Top"><VAlign y={6} /></Btn>
            <Btn label="Center Vertically"><VAlign y={10.5} /></Btn>
            <Btn label="Align Bottom"><VAlign y={15} /></Btn>
            <Sep />
            <Drop label="Currency"><Money /></Drop>
            <Btn label="Percent"><Percent /></Btn>
            <button type="button" aria-label="Number" className="h-8 w-[33px] shrink-0 text-base font-bold text-[#3b3b3b]">0.0</button>
            <Btn label="Date"><Calendar /></Btn>
            <Sep />
            <Btn label="Add Decimal Place"><AddDecimal /></Btn>
            <Btn label="Delete Decimal Place"><DelDecimal /></Btn>
            <Sep />
            <Btn label="Increase Indent"><Indent /></Btn>
            <Btn label="Decrease Indent"><Indent out /></Btn>
          </div>

          <div className="flex h-[33px] items-center">
            <Combo label="Name Box" value="I13" className="mx-px w-[155px]" />
            <Sep />
            <button type="button" aria-label="Function Wizard" className="flex w-[25px] justify-center"><Fx /></button>
            <button type="button" aria-label="Sum" className="flex w-[25px] justify-center"><Sigma /></button>
            <button type="button" aria-label="Function" className="flex w-[25px] items-center justify-center"><Equals /></button>
            <Sep />
            <input aria-label="Formula" className="h-6 min-w-0 flex-1 rounded-l-[4px] border border-r-0 border-[#a9a7a4] bg-white px-2 outline-none" />
          </div>

          <Sheet />

          <div className="h-[7px]">
            <div className="ml-[174px] mr-[106px] h-full bg-[#ef8e6a]" />
          </div>
          <div className="flex h-5 items-center pl-2">
            <NavArrow dir="l" end />
            <NavArrow dir="l" />
            <NavArrow dir="r" />
            <NavArrow dir="r" end />
            <button type="button" aria-label="Add Sheet" className="ml-2.5 mr-2 flex w-4 justify-center">
              <svg viewBox="0 0 12 12" width="12" height="12" aria-hidden="true">
                <path d="M4.300 0h3.400v4.300H12v3.400H7.700V12H4.300V7.700H0V4.300h4.300z" fill="#444" />
              </svg>
            </button>
            <button type="button" className="h-5 w-10 border border-t-0 border-[#8f8f8f] bg-white text-[13px] font-bold leading-[18px]">all</button>
          </div>

          <div className="flex h-10 items-center border-b border-[#b3b1ae]">
            <Grip />
            <button type="button" aria-label="Close Find Bar" className="mx-1.5 flex w-6 justify-center"><CloseX /></button>
            <Combo label="Find text" placeholder="Find" className="w-[248px]" />
            <button type="button" aria-label="Find Previous" className="flex w-8 justify-center"><FindArrow /></button>
            <button type="button" aria-label="Find Next" className="flex w-8 justify-center"><FindArrow down /></button>
            <button type="button" className="ml-1.5 w-12 whitespace-nowrap text-left text-xs text-[#8b8b8b]">Find All</button>
            <label className="ml-1 flex w-[153px] items-center gap-1.5 whitespace-nowrap">
              <input type="checkbox" className="h-3.5 w-3.5 shrink-0 appearance-none rounded-[3px] border border-[#b0aeab] bg-white" />
              Formatted Display
            </label>
            <label className="flex items-center gap-1.5 whitespace-nowrap">
              <input type="checkbox" className="h-3.5 w-3.5 shrink-0 appearance-none rounded-[3px] border border-[#b0aeab] bg-white" />
              Match Case
            </label>
            <div className="w-1.5" />
            <Sep />
            <Btn label="Find and Replace"><FindReplace /></Btn>
            <Sep />
          </div>

          <footer className="flex h-5 items-center text-xs">
            <span className="w-[245px] shrink-0 border-r border-[#8f8f8f] pl-2.5">Sheet 1 of 1</span>
            <span className="w-[372px] shrink-0 self-stretch" />
            <span className="w-[227px] shrink-0 border-x border-[#8f8f8f] pl-2">Default</span>
            <span className="ml-auto pr-[22px]">English (USA)</span>
          </footer>
        </main>
      </div>
    </div>
  );
}
